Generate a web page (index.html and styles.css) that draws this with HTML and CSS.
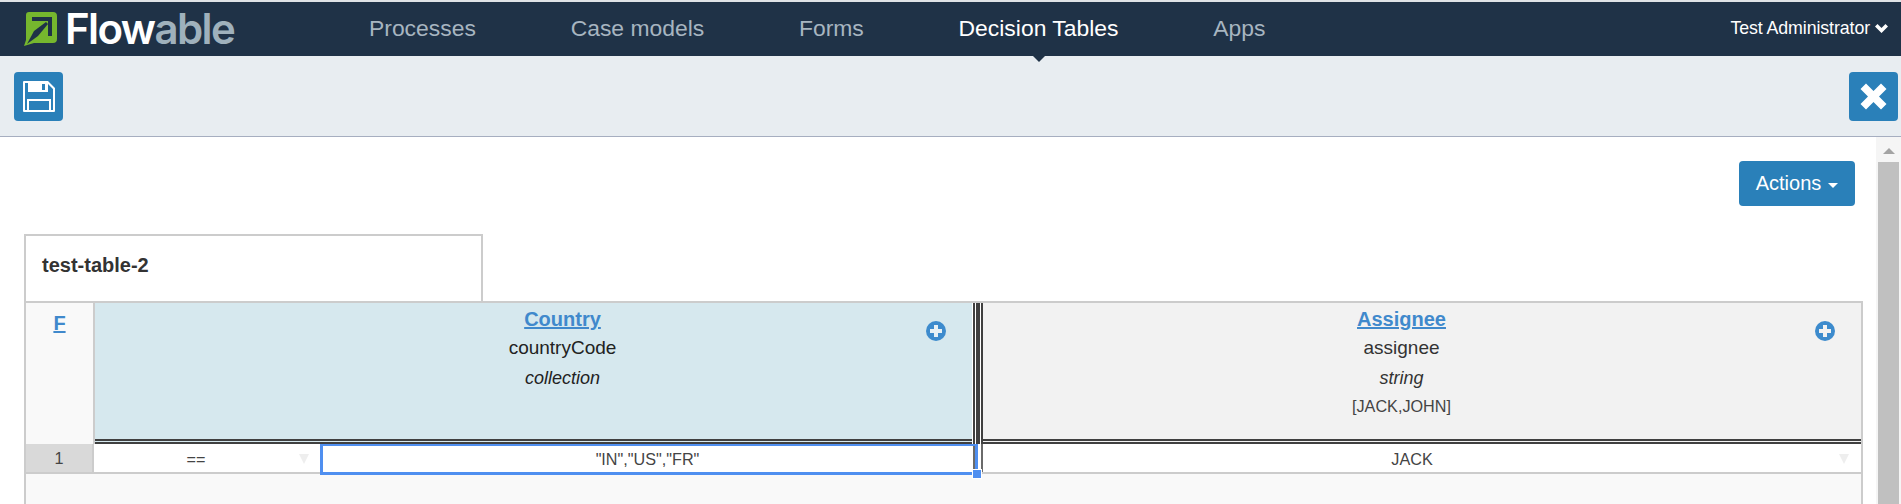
FILE: index.html
```html
<!DOCTYPE html>
<html lang="en">
<head>
<meta charset="utf-8">
<title>Flowable Decision Tables</title>
<link rel="stylesheet" href="styles.css">
</head>
<body>
<header class="navbar">
  <a class="logo">
    <svg class="logo-mark" viewBox="0 0 34 35" width="34" height="35">
      <path d="M5 1h24a4 4 0 0 1 4 4v23a4 4 0 0 1-4 4H10L0 35l2-6V4a3 3 0 0 1 3-3z" fill="#76b72e"/>
      <path d="M8 8H26V25" fill="none" stroke="#1f3247" stroke-width="4"/>
      <path d="M3 33 10 20 22 11 24 13 14 25z" fill="#1f3247"/>
    </svg>
    <span class="logo-text">Flow<span class="logo-dim">able</span></span>
  </a>
  <nav class="nav">
    <a class="nav-item">Processes</a>
    <a class="nav-item">Case models</a>
    <a class="nav-item">Forms</a>
    <a class="nav-item active">Decision Tables</a>
    <a class="nav-item">Apps</a>
  </nav>
  <div class="user">Test Administrator
    <svg class="chev" viewBox="0 0 13 9" width="13" height="9"><path d="M2.500 0 6.500 4 10.500 0 13 2.500 6.500 9 0 2.500z" fill="#fff"/></svg>
  </div>
</header>
<div class="toolbar">
  <button class="tool-btn" aria-label="Save">
    <svg viewBox="0 0 32 31" width="32" height="31">
      <path fill-rule="evenodd" fill="#fff" d="M1 0h24l7 7v23a1 1 0 0 1-1 1H1a1 1 0 0 1-1-1V1a1 1 0 0 1 1-1zM2 2v27h2V18h24v11h2V8L25 3v8H5V2zM6 20v9h20v-9zM19 3v6h3V3z"/>
    </svg>
  </button>
  <button class="tool-btn" aria-label="Close">
    <svg viewBox="0 0 27 27" width="27" height="27"><path d="M6 0.500 13.500 8 21 0.500 26.500 6 19 13.500 26.500 21 21 26.500 13.500 19 6 26.500 0.500 21 8 13.500 0.500 6z" fill="#fff"/></svg>
  </button>
</div>
<div class="workspace">
  <main class="content">
    <div class="actions-row">
      <button class="actions-btn">Actions<span class="caret"></span></button>
    </div>
    <div class="title-box">test-table-2</div>
    <section class="grid">
      <div class="head-row">
        <div class="corner"><a class="link">F</a></div>
        <div class="head head-input">
          <a class="link">Country</a>
          <div class="var">countryCode</div>
          <div class="type">collection</div>
          <svg class="plus" viewBox="0 0 20 20" width="20" height="20"><circle cx="10" cy="10" r="10" fill="#3d8bcd"/><path d="M8 4h4v4h4v4h-4v4H8v-4H4V8h4z" fill="#e8f1f5"/></svg>
        </div>
        <div class="divider"></div>
        <div class="head head-output">
          <a class="link">Assignee</a>
          <div class="var">assignee</div>
          <div class="type">string</div>
          <div class="values">[JACK,JOHN]</div>
          <svg class="plus" viewBox="0 0 20 20" width="20" height="20"><circle cx="10" cy="10" r="10" fill="#3d8bcd"/><path d="M8 4h4v4h4v4h-4v4H8v-4H4V8h4z" fill="#f2f2f2"/></svg>
        </div>
      </div>
      <div class="data-row">
        <div class="row-num">1</div>
        <div class="cell cell-op">==<span class="arrow"></span></div>
        <div class="cell cell-sel">"IN","US","FR"<span class="handle"></span></div>
        <div class="cell-divider"></div>
        <div class="cell cell-out">JACK<span class="arrow"></span></div>
      </div>
      <div class="grid-rest"></div>
    </section>
  </main>
  <div class="scrollbar">
    <span class="scroll-up"></span>
    <span class="scroll-thumb"></span>
  </div>
</div>
</body>
</html>
```
FILE: styles.css
```css
* { box-sizing: border-box; }
html, body { margin: 0; padding: 0; height: 504px; overflow: hidden; }
body {
  display: flex;
  flex-direction: column;
  font-family: "Liberation Sans", Arial, sans-serif;
  color: #333;
  background: #fff;
  border-top: 2px solid #dfe3e6;
}
.navbar {
  height: 54px;
  flex: none;
  background: #1f3247;
  display: flex;
  align-items: center;
  color: #fff;
  position: relative;
}
.logo {
  width: 345px;
  flex: none;
  margin-left: 24px;
  display: flex;
  align-items: center;
  height: 100%;
}
.logo-mark { flex: none; margin-top: -2px; }
.logo-text {
  font-family: "Inter", sans-serif;
  font-weight: 600;
  font-size: 42px;
  line-height: 54px;
  color: #fff;
  margin-left: 7px;
  letter-spacing: -1.600px;
}
.logo-dim { color: #9fb1bc; }
.nav { display: flex; gap: 94.750px; flex: 1; }
.nav-item {
  font-size: 22.900px;
  line-height: 30px;
  color: #a7b5c0;
  position: relative;
  top: -1px;
}
.nav-item.active { color: #fff; }
.nav-item.active::after {
  content: "";
  position: absolute;
  left: 50%;
  margin-left: -7px;
  top: 42px;
  border: 7px solid transparent;
  border-bottom: 0;
  border-top-color: #1f3247;
}
.user {
  font-size: 17.800px;
  margin-right: 13px;
  display: flex;
  align-items: center;
  gap: 5px;
  letter-spacing: -0.1px;
  position: relative;
  top: -1px;
}
.toolbar {
  height: 81px;
  flex: none;
  background: #e8edf1;
  border-bottom: 1px solid #a6aec0;
  display: flex;
  justify-content: space-between;
  align-items: flex-start;
  padding: 16px 3px 0 14px;
}
.tool-btn {
  width: 49px;
  height: 49px;
  padding: 0;
  border: 0;
  border-radius: 4px;
  background: #2a80b9;
  display: flex;
  align-items: center;
  justify-content: center;
}
.workspace { flex: 1; display: flex; min-height: 0; }
.content { flex: 1; min-width: 0; display: flex; flex-direction: column; padding: 24px 13px 0 24px; }
.actions-row { display: flex; justify-content: flex-end; padding-right: 8px; height: 73px; flex: none; }
.actions-btn {
  width: 116px;
  height: 45px;
  border: 0;
  border-radius: 4px;
  background: #2a80b9;
  color: #fff;
  font: 20px "Liberation Sans", Arial, sans-serif;
  display: flex;
  align-items: center;
  justify-content: center;
}
.caret {
  margin-left: 7px;
  margin-top: 3px;
  border: 5px solid transparent;
  border-bottom: 0;
  border-top-color: #fff;
}
.title-box {
  width: 459px;
  height: 67px;
  flex: none;
  border: 2px solid #ccc;
  border-bottom: 0;
  padding: 15px 0 0 16px;
  font-size: 20px;
  font-weight: 700;
  line-height: 28px;
}
.grid {
  flex: 1;
  display: flex;
  flex-direction: column;
  border-left: 2px solid #ccc;
  border-right: 2px solid #ccc;
  border-top: 2px solid #ccc;
  background: #f9f9f9;
}
.head-row { display: flex; height: 141px; flex: none; }
.corner {
  width: 69px;
  flex: none;
  background: #f9f9f9;
  border-right: 2px solid #ccc;
  text-align: center;
  padding-top: 6px;
}
.link {
  color: #4089cc;
  font-size: 20px;
  font-weight: 700;
  text-decoration: underline;
  line-height: 28px;
}
.head {
  position: relative;
  text-align: center;
  border-bottom: 5px double #404040;
  color: #222;
}
.head-input { width: 877px; flex: none; background: #d6e8ee; padding-left: 58px; padding-top: 2px; }
.head-output { flex: 1; background: #f2f2f2; padding-right: 41px; padding-top: 2px; color: #333; }
.var { font-size: 19px; line-height: 28px; margin-top: 1px; }
.type { font-size: 18px; font-style: italic; line-height: 32px; }
.values { font-size: 16.200px; line-height: 24px; color: #444; }
.plus { position: absolute; top: 18px; }
.head-input .plus { right: 26px; }
.head-output .plus { right: 26px; }
.divider {
  width: 11px;
  flex: none;
  background: linear-gradient(90deg, #fff 0 1px, #404040 1px 3px, #fff 3px 4px, #404040 4px 8px, #fff 8px 9px, #404040 9px 11px);
}
.data-row { display: flex; height: 30px; flex: none; background: #fff; border-bottom: 2px solid #ccc; font-size: 16.200px; color: #444; }
.row-num {
  width: 68px;
  flex: none;
  background: #d9d9d9;
  border-right: 2px solid #ccc;
  text-align: center;
  line-height: 28px;
}
.cell { position: relative; text-align: center; line-height: 30px; }
.cell-op { width: 226px; flex: none; padding-right: 22px; }
.cell-sel {
  width: 658px;
  flex: none;
  border: 3px solid #4f8ff0;
  border-top-width: 2px;
  padding-right: 3px;
  line-height: 26px;
  height: 31px;
  z-index: 1;
}
.cell-sel::after {
  content: "";
  position: absolute;
  right: 0;
  top: 0;
  bottom: 0;
  width: 2px;
  background: #6a6a6a;
}
.handle {
  position: absolute;
  right: -7px;
  bottom: -7px;
  width: 10px;
  height: 10px;
  background: #4f8ff0;
  border: 1px solid #fff;
  z-index: 1;
}
.cell-divider {
  width: 5px;
  flex: none;
  background: linear-gradient(90deg, #fff 0 3px, #6a6a6a 3px 5px);
}
.cell-out { flex: 1; padding-right: 20px; }
.arrow {
  position: absolute;
  top: 10px;
  width: 0;
  height: 0;
  border-left: 5px solid transparent;
  border-right: 5px solid transparent;
  border-top: 10px solid #eee;
}
.cell-op .arrow { left: 205px; }
.cell-out .arrow { right: 12px; }
.grid-rest { flex: 1; }
.scrollbar {
  width: 25px;
  flex: none;
  background: #f5f5f5;
  display: flex;
  flex-direction: column;
  align-items: center;
  padding-top: 11px;
}
.scroll-up {
  border: 6px solid transparent;
  border-top: 0;
  border-bottom: 6px solid #a3a3a3;
}
.scroll-thumb { width: 21px; flex: 1; background: #c0c0c0; margin-top: 8px; }
```
